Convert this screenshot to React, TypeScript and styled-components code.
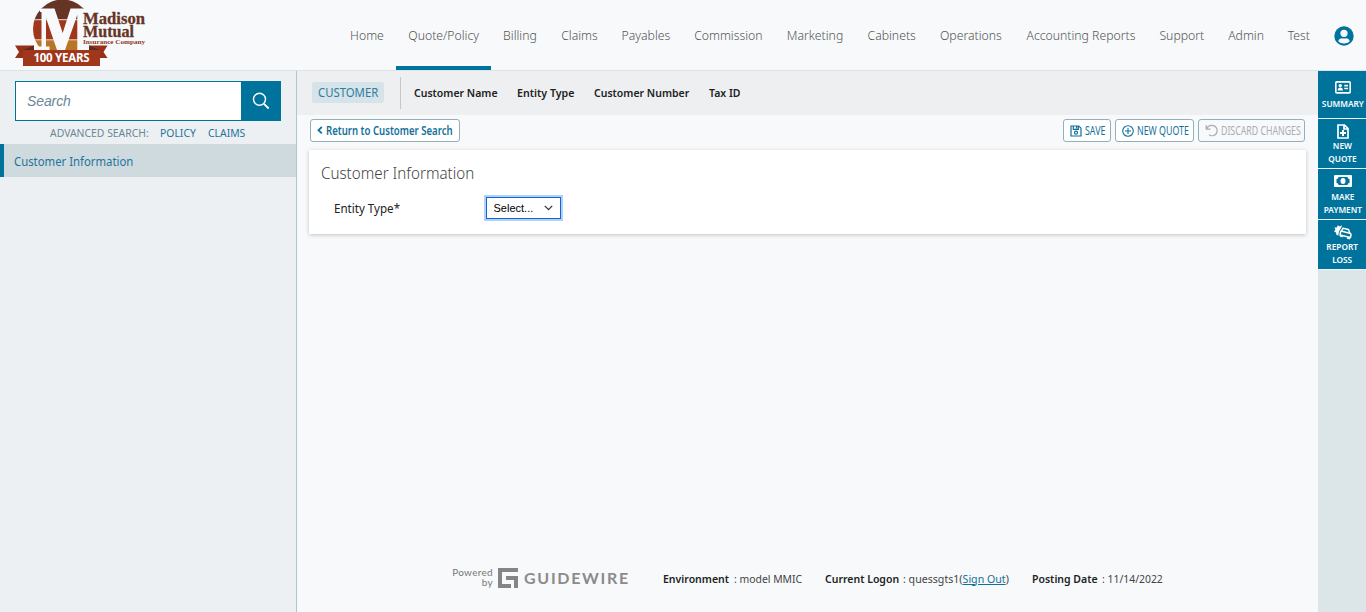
import React from "react";
import styled, { createGlobalStyle } from "styled-components";

const BLUE = "#00739d";

const Global = createGlobalStyle`
  * { box-sizing: border-box; }
  body { margin: 0; font-family: "Noto Sans", sans-serif; background: #f7f9fb; overflow: hidden; }
  svg { display: block; flex: none; }
`;

const Page = styled.div`
  height: 612px;
  width: 1366px;
  display: flex;
  flex-direction: column;
`;

const Header = styled.header`
  height: 71px;
  flex: none;
  display: flex;
  background: #f7f9fb;
  border-bottom: 1px solid #d7e4e8;
`;

const LogoBox = styled.div`
  width: 338px;
  padding-left: 15px;
`;

const Nav = styled.nav`
  display: flex;
`;

const NavItem = styled.a<{ $w: number; $active?: boolean }>`
  width: ${(p) => p.$w}px;
  height: 70px;
  padding-bottom: 1px;
  display: flex;
  align-items: center;
  justify-content: center;
  white-space: nowrap;
  font-size: 13px;
  font-weight: 300;
  color: #555;
  border-top: 4px solid transparent;
  border-bottom: 4px solid ${(p) => (p.$active ? BLUE : "transparent")};
`;

const NavText = styled.span`
  transform: scaleX(0.94);
`;

/* Narrowed text: takes $w pixels of the row and is squeezed by $x from its left edge. */
const Narrow = styled.span<{ $w: number; $x: number }>`
  display: inline-block;
  flex: none;
  width: ${(p) => p.$w}px;
  white-space: nowrap;
  text-align: left;
  transform: scaleX(${(p) => p.$x});
  transform-origin: 0 50%;
`;

const UserButton = styled.div`
  margin: 26px 0 0 13px;
`;

const Body = styled.div`
  flex: 1;
  display: flex;
  min-height: 0;
`;

const Sidebar = styled.aside`
  width: 297px;
  flex: none;
  background: #ecf0f3;
  border-right: 1px solid #b4c6cd;
`;

const SearchRow = styled.div`
  margin: 10px 0 0 15px;
  width: 266px;
  height: 40px;
  display: flex;
`;

const SearchField = styled.div`
  flex: 1;
  display: flex;
  align-items: center;
  padding-left: 11px;
  background: #fff;
  border: 1px solid ${BLUE};
  font: italic 14px "Liberation Sans", Arial, sans-serif;
  letter-spacing: -0.1px;
  color: #6a8896;
`;

const SearchButton = styled.div`
  width: 39px;
  padding-right: 1px;
  display: flex;
  align-items: center;
  justify-content: center;
  background: ${BLUE};
`;

const Advanced = styled.div`
  height: 23px;
  padding: 0 0 0 50px;
  display: flex;
  align-items: center;
  font-size: 11px;
  color: #6b8794;
`;

const AdvancedLink = styled.a`
  margin-left: 11px;
  color: #1f749b;
`;

const SideItem = styled.div`
  height: 33px;
  display: flex;
  align-items: center;
  padding: 1px 0 0 10px;
  border-left: 4px solid ${BLUE};
  background: #cfdadf;
  font-size: 12px;
  color: #1f749b;
`;

const Main = styled.main`
  width: 1021px;
  flex: none;
  display: flex;
  flex-direction: column;
`;

const Context = styled.div`
  height: 44px;
  flex: none;
  display: flex;
  align-items: center;
  padding-left: 15px;
  background: #edeff1;
`;

const Tag = styled.div`
  width: 72px;
  height: 21px;
  margin-bottom: 1px;
  padding-left: 6px;
  border-radius: 3px;
  display: flex;
  align-items: center;
  background: #d6e3e8;
  color: #2b7ea2;
  font-size: 12px;
`;

const Divider = styled.div`
  width: 1px;
  height: 32px;
  margin: 0 13px 0 16px;
  background: #c4c8cb;
`;

const ContextLabel = styled.div<{ $w: number }>`
  width: ${(p) => p.$w}px;
  padding-bottom: 2px;
  font-size: 11px;
  font-weight: 600;
  color: #222;
`;

const Toolbar = styled.div`
  height: 35px;
  flex: none;
  display: flex;
  align-items: flex-start;
  gap: 4px;
  padding: 4px 13px 0;
`;

const Button = styled.button<{ $w: number; $disabled?: boolean; $bold?: boolean }>`
  width: ${(p) => p.$w}px;
  height: 23px;
  padding: 0 0 0 6px;
  display: flex;
  align-items: center;
  gap: 3px;
  border: 1px solid #93afb9;
  border-radius: 3px;
  background: ${(p) => (p.$disabled ? "#f7f9fb" : "#fff")};
  color: ${(p) => (p.$disabled ? "#a9adb0" : "#12709a")};
  font: ${(p) => (p.$bold ? 600 : 400)} 12px "Noto Sans", sans-serif;
  white-space: nowrap;
`;

const Spacer = styled.div`
  flex: 1;
`;

const Card = styled.section`
  margin: 0 12px;
  height: 84px;
  flex: none;
  padding: 12px 12px 0;
  background: #fff;
  box-shadow: 0 1px 4px rgba(0, 0, 0, 0.22);
`;

const CardTitle = styled.h2`
  margin: 0;
  height: 22px;
  line-height: 22px;
  font-size: 16px;
  font-weight: 300;
  color: #444;
`;

const FieldRow = styled.div`
  height: 26px;
  margin-top: 11px;
  padding-left: 13px;
  display: flex;
  align-items: center;
`;

const FieldLabel = styled.label`
  width: 150px;
  font-size: 12px;
  color: #222;
`;

const SelectBox = styled.div`
  width: 79px;
  height: 26px;
  padding: 0 8px 0 7.5px;
  display: flex;
  align-items: center;
  justify-content: space-between;
  border: 2px solid #b3d2f2;
  box-shadow: inset 0 0 0 1px #0a66de;
  font: 11px "Liberation Sans", Arial, sans-serif;
  color: #000;
`;

const Footer = styled.footer`
  height: 30px;
  margin: auto 0 19px;
  padding-left: 154px;
  display: flex;
  align-items: center;
  font-size: 11px;
  color: #444;
`;

const Powered = styled.div`
  width: 42px;
  margin: -2px 5px 0 0;
  text-align: right;
  font: 10px/10px Lato, sans-serif;
  letter-spacing: 0.3px;
  color: #777;
`;

const Brand = styled.div`
  width: 144.5px;
  padding: 0 0 1px 6px;
  font: 700 16px Lato, sans-serif;
  letter-spacing: 1.7px;
  color: #8b8b8b;
`;

const Info = styled.div<{ $w: number }>`
  width: ${(p) => p.$w}px;
  display: flex;
  b { font-weight: 600; color: #222; }
  a { color: #12709a; text-decoration: underline; }
`;

const Rail = styled.aside`
  width: 48px;
  flex: none;
  background: #dce5e8;
`;

const RailItem = styled.div<{ $h: number; $pad: number }>`
  height: ${(p) => p.$h}px;
  padding-top: ${(p) => p.$pad}px;
  padding-left: 1px;
  display: flex;
  flex-direction: column;
  align-items: center;
  background: ${BLUE};
  border-bottom: 1px solid #f0f6f8;
  color: #fff;
  font-size: 9px;
  font-weight: 600;
  line-height: 13px;
  text-align: center;
  white-space: pre;
`;

const RailText = styled.div<{ $top?: number }>`
  margin-top: ${(p) => p.$top ?? 0}px;
  transform: scaleX(0.92);
`;

const navItems: [string, number][] = [
  ["Home", 58], ["Quote/Policy", 95], ["Billing", 58], ["Claims", 61], ["Payables", 72],
  ["Commission", 92.5], ["Marketing", 81], ["Cabinets", 72.5], ["Operations", 86],
  ["Accounting Reports", 133], ["Support", 69], ["Admin", 60], ["Test", 45],
];

const Logo = () => (
  <svg width="132" height="68" viewBox="15 0 132 68">
    <defs>
      <clipPath id="disc"><circle cx="62.5" cy="29" r="29.5" /></clipPath>
    </defs>
    <g clipPath="url(#disc)">
      <rect x="30" y="0" width="65" height="20" fill="#653425" />
      <rect x="30" y="20" width="65" height="20" fill="#a0371c" />
      <rect x="30" y="40" width="65" height="20" fill="#b97526" />
      <path d="M30 19.700h65M30 39.800h65" stroke="#eadcd4" strokeWidth="1" />
    </g>
    <path d="M40 8.500H54.500L62.700 33 70.500 8.500H95V50H77.300V15L65 50H57L46 18V46.500H49.500V50H37.500V46.500H41.500V12H40z" fill="#f7f9fb" />
    <path d="M15 45.500h19v12.500H15l4-6zM107.500 45.500H89v12.500h18.500l-4-6z" fill="#963019" />
    <path d="M23 50l11-4.500V50zM100 50l-11-4.500V50z" fill="#602b1e" />
    <rect x="23" y="50" width="77" height="16" fill="#a0371c" />
    <text x="33.500" y="62" textLength="56" fontSize="11.500" fontWeight="700" fontFamily="Noto Sans" fill="#fff">100 YEARS</text>
    <g fontFamily="Liberation Serif" fontWeight="700" fill="#653425">
      <text x="83" y="24" textLength="62" lengthAdjust="spacingAndGlyphs" fontSize="16.500" stroke="#653425" strokeWidth=".3">Madison</text>
      <text x="83" y="36.800" textLength="51" lengthAdjust="spacingAndGlyphs" fontSize="16" stroke="#653425" strokeWidth=".3">Mutual</text>
      <text x="83" y="43.500" textLength="62" lengthAdjust="spacingAndGlyphs" fontSize="7" fill="#8d3a28">Insurance Company</text>
    </g>
  </svg>
);

const UserIcon = () => (
  <svg width="20" height="20" viewBox="0 0 20 20">
    <circle cx="10" cy="10" r="9.700" fill={BLUE} />
    <circle cx="10" cy="7.300" r="3.600" fill="#f7f9fb" />
    <path d="M4.200 15.200c.8-2.400 2.500-3 3.600-3 .9.500 3.500.5 4.400 0 1.100 0 2.800.6 3.600 3-3 3-8.600 3-11.600 0z" fill="#f7f9fb" />
  </svg>
);

const SearchIcon = () => (
  <svg width="18" height="18" viewBox="0 0 18 18" fill="none" stroke="#fff" strokeWidth="1.400">
    <circle cx="7.500" cy="7.300" r="6" />
    <path d="M12 11.800l4.700 4.700" strokeWidth="1.800" />
  </svg>
);

const SaveIcon = () => (
  <svg width="12" height="12" viewBox="0 0 12 12" fill="none" stroke="currentColor" strokeWidth="1.200">
    <path d="M1 1h7.800L11 3.200V11H1zM3.300 1v3.400h5V1M6.600 1.500v2" />
    <circle cx="6" cy="7.700" r="1.500" />
  </svg>
);

const PlusIcon = () => (
  <svg width="12" height="12" viewBox="0 0 12 12" fill="none" stroke="currentColor" strokeWidth="1.100">
    <circle cx="6" cy="6" r="5.300" />
    <path d="M6 3v6M3 6h6" />
  </svg>
);

const UndoIcon = () => (
  <svg width="13" height="13" viewBox="0 0 13 13" fill="none" stroke="currentColor" strokeWidth="1.200">
    <path d="M1.200 1v4.200h4.300M1.500 5C3 1.800 6 .9 8.400 1.600c5 1.500 4.700 8.600.2 9.900-1.800.5-3.400.1-4.600-.8" />
  </svg>
);

const ChevronLeft = () => (
  <svg width="6" height="10" viewBox="0 0 6 10" fill="none" stroke="currentColor" strokeWidth="1.800">
    <path d="M4.800 1L1.500 4.200l3.300 3.200" />
  </svg>
);

const ChevronDown = () => (
  <svg width="9" height="6" viewBox="0 0 9 6" fill="none" stroke="#333" strokeWidth="1.300">
    <path d="M.8.900l3.700 3.700L8.200.9" />
  </svg>
);

const CardIcon = () => (
  <svg width="16" height="13" viewBox="0 0 16 13" fill="none" stroke="#fff" strokeWidth="1.600">
    <rect x=".8" y=".9" width="14.400" height="11" rx="1" />
    <circle cx="5.300" cy="4.600" r="1.700" fill="#fff" stroke="none" />
    <path d="M2.600 9.600c0-4 5.400-4 5.400 0z" fill="#fff" stroke="none" />
    <path d="M9.300 4.700h3.600M9.300 7.500h3.600" strokeWidth="1.700" />
  </svg>
);

const FileIcon = () => (
  <svg width="12" height="15" viewBox="0 0 12 15" fill="none" stroke="#fff" strokeWidth="1.700">
    <path d="M1 1h6.500L11 4.500V14H1zM7 1v4h4" />
    <path d="M6 6v6M3 9h6" strokeWidth="2" />
  </svg>
);

const MoneyIcon = () => (
  <svg width="18" height="12" viewBox="0 0 18 12">
    <rect width="18" height="12" rx="1" fill="#fff" />
    <path d="M4.500 2h9a2 2 0 0 0 2 2v4a2 2 0 0 0-2 2h-9a2 2 0 0 0-2-2V4a2 2 0 0 0 2-2z" fill={BLUE} />
    <ellipse cx="9" cy="6" rx="2.500" ry="3" fill="#fff" />
  </svg>
);

const CrashIcon = () => (
  <svg width="18" height="15" viewBox="0 0 18 15">
    <path d="M8 .3L7.300 2.500 5 6.500 4.200 10.800 2.300 9.500 2 7.600 0 6.500 1.400 4.800.5 2.500 2.900 2.600 3.800.2 5.600 1.600z" fill="#fff" />
    <g fill="none" stroke="#fff" strokeWidth="1.500" strokeLinejoin="round">
      <path d="M7.600 6L9 3.200l5.500 1.300 1.200 3.400" />
      <path d="M7 6.100l9.600 2.300.4 1.600-.6 2.500-10.400-2.600.5-2.400z" />
    </g>
    <path d="M6 10l2.800.7-.3 1.700-2.800-.8zM13.300 11.900l2.900.7-.4 2-2.900-.8z" fill="#fff" />
  </svg>
);

const GuidewireMark = () => (
  <svg width="20" height="20" viewBox="0 0 20 20" fill="#858585">
    <path d="M0 0h20v4H4v12h4v4H0zM8 8h12v12h-4v-8H8zM8 16h5v4H8z" />
  </svg>
);

export default function App() {
  return (
    <Page>
      <Global />
      <Header>
        <LogoBox><Logo /></LogoBox>
        <Nav>
          {navItems.map(([label, w]) => (
            <NavItem key={label} $w={w} $active={label === "Quote/Policy"}><NavText>{label}</NavText></NavItem>
          ))}
        </Nav>
        <UserButton><UserIcon /></UserButton>
      </Header>
      <Body>
        <Sidebar>
          <SearchRow>
            <SearchField>Search</SearchField>
            <SearchButton><SearchIcon /></SearchButton>
          </SearchRow>
          <Advanced>
            <Narrow $w={99} $x={0.945}>ADVANCED SEARCH:</Narrow>
            <AdvancedLink><Narrow $w={36.5} $x={0.945}>POLICY</Narrow></AdvancedLink>
            <AdvancedLink><Narrow $w={38} $x={0.945}>CLAIMS</Narrow></AdvancedLink>
          </Advanced>
          <SideItem><Narrow $w={119} $x={0.945}>Customer Information</Narrow></SideItem>
        </Sidebar>
        <Main>
          <Context>
            <Tag><Narrow $w={61} $x={0.945}>CUSTOMER</Narrow></Tag>
            <Divider />
            <ContextLabel $w={103}><Narrow $w={84} $x={0.955}>Customer Name</Narrow></ContextLabel>
            <ContextLabel $w={77}><Narrow $w={57} $x={0.965}>Entity Type</Narrow></ContextLabel>
            <ContextLabel $w={115}><Narrow $w={95} $x={0.955}>Customer Number</Narrow></ContextLabel>
            <ContextLabel $w={40}><Narrow $w={32} $x={0.955}>Tax ID</Narrow></ContextLabel>
          </Context>
          <Toolbar>
            <Button $w={150} $bold><ChevronLeft /><Narrow $w={127} $x={0.8}>Return to Customer Search</Narrow></Button>
            <Spacer />
            <Button $w={48}><SaveIcon /><Narrow $w={20} $x={0.735}>SAVE</Narrow></Button>
            <Button $w={79}><PlusIcon /><Narrow $w={50} $x={0.735}>NEW QUOTE</Narrow></Button>
            <Button $w={107} $disabled><UndoIcon /><Narrow $w={78} $x={0.73}>DISCARD CHANGES</Narrow></Button>
          </Toolbar>
          <Card>
            <CardTitle><Narrow $w={153} $x={0.948}>Customer Information</Narrow></CardTitle>
            <FieldRow>
              <FieldLabel><Narrow $w={66} $x={0.965}>Entity Type*</Narrow></FieldLabel>
              <SelectBox>Select...<ChevronDown /></SelectBox>
            </FieldRow>
          </Card>
          <Footer>
            <Powered>Powered<br />by</Powered>
            <GuidewireMark />
            <Brand>GUIDEWIRE</Brand>
            <Info $w={162}><Narrow as="b" $w={71} $x={0.955}>Environment</Narrow><Narrow $w={70} $x={0.945}>: model MMIC</Narrow></Info>
            <Info $w={207.5}><Narrow as="b" $w={78.5} $x={0.955}>Current Logon</Narrow><Narrow $w={108} $x={0.965}>: quessgts1(<a>Sign Out</a>)</Narrow></Info>
            <Info $w={140}><Narrow as="b" $w={70} $x={0.955}>Posting Date</Narrow><Narrow $w={62} $x={0.945}>: 11/14/2022</Narrow></Info>
          </Footer>
        </Main>
        <Rail>
          <RailItem $h={48} $pad={10}><CardIcon /><RailText $top={3}>SUMMARY</RailText></RailItem>
          <RailItem $h={50} $pad={5}><FileIcon /><RailText>{"NEW\nQUOTE"}</RailText></RailItem>
          <RailItem $h={51} $pad={6}><MoneyIcon /><RailText $top={3}>{"MAKE\nPAYMENT"}</RailText></RailItem>
          <RailItem $h={50} $pad={5}><CrashIcon /><RailText>{"REPORT\nLOSS"}</RailText></RailItem>
        </Rail>
      </Body>
    </Page>
  );
}
